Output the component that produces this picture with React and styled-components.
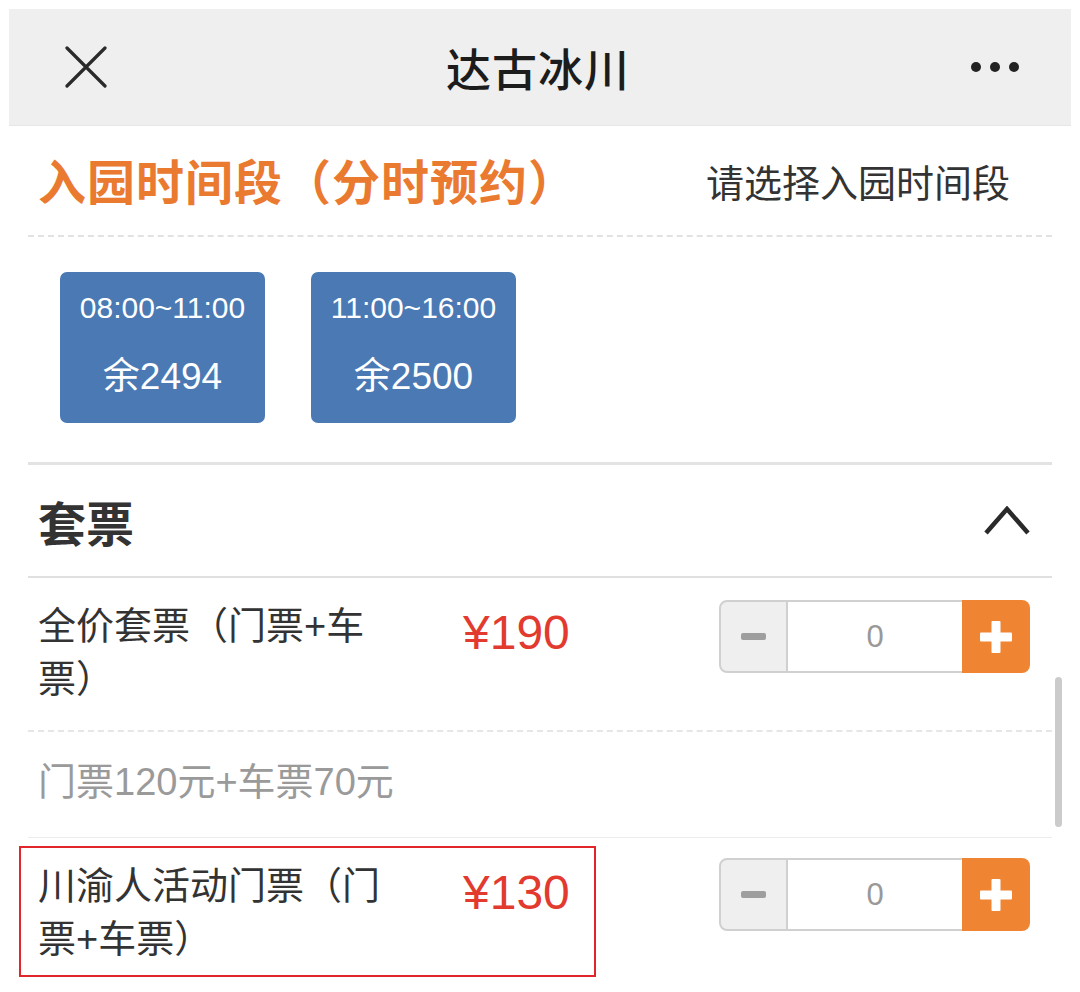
import React from 'react'
import styled, { createGlobalStyle } from 'styled-components'

const GlobalStyle = createGlobalStyle`
  body{
    margin:0;
    background:#fff;
    font-family:"Liberation Sans","Noto Sans CJK SC",sans-serif;
    color:#333;
  }
`

const Page = styled.div`
  width:1080px;
`

const Header = styled.header`
  margin:9px 9px 0;
  height:117px;
  box-sizing:border-box;
  background:#efefef;
  border-bottom:1px solid #e6e6e6;
  display:grid;
  grid-template-columns:1fr auto 1fr;
  align-items:center;
  padding:0 52px 0 56px;
`

const HeaderTitle = styled.h1`
  margin:0 8px 0 0;
  font-size:45px;
  font-weight:500;
  color:#1c1c1c;
  letter-spacing:1px;
`

const Dots = styled.svg`
  justify-self:end;
`

const Content = styled.div`
  padding:0 28px;
`

const SectionHead = styled.div`
  height:111px;
  box-sizing:border-box;
  display:flex;
  align-items:center;
  justify-content:space-between;
  padding:0 42px 0 10px;
  border-bottom:2px dashed #e2e2e2;
`

const OrangeTitle = styled.h2`
  margin:0 0 4px;
  font-size:48px;
  font-weight:700;
  letter-spacing:1px;
  color:#e97a30;
`

const Hint = styled.span`
  font-size:38px;
  color:#333;
`

const SlotList = styled.div`
  display:flex;
  gap:46px;
  padding:35px 0 39px 32px;
  border-bottom:3px solid #e3e3e3;
`

const Slot = styled.button`
  width:205px;
  height:151px;
  border:none;
  border-radius:7px;
  background:#4a79b4;
  color:#fff;
  display:flex;
  flex-direction:column;
  align-items:center;
  padding:16px 0 0;
  font-family:inherit;
  .time{
    font-size:30px;
    line-height:40px;
  }
  .left{
    font-size:37px;
    line-height:40px;
    margin-top:29px;
  }
`

const GroupHead = styled.div`
  height:113px;
  box-sizing:border-box;
  display:flex;
  align-items:center;
  justify-content:space-between;
  padding:0 22px 0 10px;
  border-bottom:2px solid #e0e0e0;
  h3{
    margin:0;
    font-size:48px;
    font-weight:700;
    color:#333;
  }
`

const TicketList = styled.div`
  position:relative;
`

const ScrollBar = styled.div`
  position:absolute;
  top:99px;
  right:-10px;
  width:7px;
  height:150px;
  border-radius:4px;
  background:#cbcbcb;
`

const Card = styled.div`
  border-bottom:${p => p.last ? 'none' : '1px solid #ececec'};
`

const Row = styled.div`
  position:relative;
  display:flex;
  align-items:flex-start;
  padding:${p => p.last ? '20px 22px 24px 10px' : '22px 22px 24px 10px'};
  border-bottom:${p => p.dashed ? '2px dashed #e6e6e6' : 'none'};
  ${p => p.marked && `
    &::after{
      content:"";
      position:absolute;
      left:-9px;
      top:8px;
      width:577px;
      height:131px;
      box-sizing:border-box;
      border:2px solid #e0262a;
      pointer-events:none;
    }
  `}
`

const Name = styled.div`
  width:350px;
  margin-right:75px;
  font-size:38px;
  line-height:53px;
  color:#333;
  margin-top:${p => p.last ? '2px' : '0'};
`

const Price = styled.div`
  font-size:48px;
  line-height:53px;
  margin-top:${p => p.last ? '8px' : '6px'};
  color:#e23a2e;
`

const Desc = styled.div`
  padding:24px 10px 28px;
  font-size:38px;
  line-height:53px;
  color:#9a9a9a;
`

const StepperBox = styled.div`
  margin-left:auto;
  display:flex;
  width:311px;
  height:73px;
`

const Minus = styled.div`
  width:69px;
  box-sizing:border-box;
  border:2px solid #d0d0d0;
  border-radius:8px 0 0 8px;
  background:#efefef;
  display:flex;
  align-items:center;
  justify-content:center;
  &::before{
    content:"";
    width:25px;
    height:7px;
    border-radius:2px;
    background:#9e9e9e;
  }
`

const Count = styled.div`
  flex:1;
  box-sizing:border-box;
  border-top:2px solid #d0d0d0;
  border-bottom:2px solid #d0d0d0;
  display:flex;
  align-items:center;
  justify-content:center;
  font-size:31px;
  color:#999;
`

const Plus = styled.div`
  width:68px;
  border-radius:0 8px 8px 0;
  background:#ef8533;
  display:flex;
  align-items:center;
  justify-content:center;
`

const Stepper = () => (
  <StepperBox>
    <Minus />
    <Count>0</Count>
    <Plus>
      <svg width="32" height="32" viewBox="0 0 32 32">
        <rect x="11.5" y="0" width="9" height="32" rx="1" fill="#fff" />
        <rect x="0" y="11.5" width="32" height="9" rx="1" fill="#fff" />
      </svg>
    </Plus>
  </StepperBox>
)

const slots = [
  { time: '08:00~11:00', left: 2494 },
  { time: '11:00~16:00', left: 2500 },
]

const App = () => {
  return (
    <Page>
      <GlobalStyle />
      <Header>
        <svg width="42" height="42" viewBox="0 0 42 42">
          <path d="M2 2L40 40M40 2L2 40" stroke="#2a2a2a" strokeWidth="3.2" strokeLinecap="round" />
        </svg>
        <HeaderTitle>达古冰川</HeaderTitle>
        <Dots width="48" height="12" viewBox="0 0 48 12">
          <circle cx="5" cy="6" r="5" fill="#222" />
          <circle cx="24" cy="6" r="5" fill="#222" />
          <circle cx="43" cy="6" r="5" fill="#222" />
        </Dots>
      </Header>

      <Content>
        <SectionHead>
          <OrangeTitle>入园时间段（分时预约）</OrangeTitle>
          <Hint>请选择入园时间段</Hint>
        </SectionHead>

        <SlotList>
          {slots.map(s => (
            <Slot key={s.time}>
              <span className="time">{s.time}</span>
              <span className="left">余{s.left}</span>
            </Slot>
          ))}
        </SlotList>

        <GroupHead>
          <h3>套票</h3>
          <svg width="46" height="30" viewBox="0 0 46 30">
            <path d="M2 27L23 3L44 27" fill="none" stroke="#2a2a2a" strokeWidth="4.5" />
          </svg>
        </GroupHead>

        <TicketList>
          <Card>
            <Row dashed>
              <Name>全价套票（门票+车票）</Name>
              <Price>¥190</Price>
              <Stepper />
            </Row>
            <Desc>门票120元+车票70元</Desc>
          </Card>
          <Card last>
            <Row last marked>
              <Name last>川渝人活动门票（门票+车票）</Name>
              <Price last>¥130</Price>
              <Stepper />
            </Row>
          </Card>
          <ScrollBar />
        </TicketList>
      </Content>
    </Page>
  )
}

export default App
